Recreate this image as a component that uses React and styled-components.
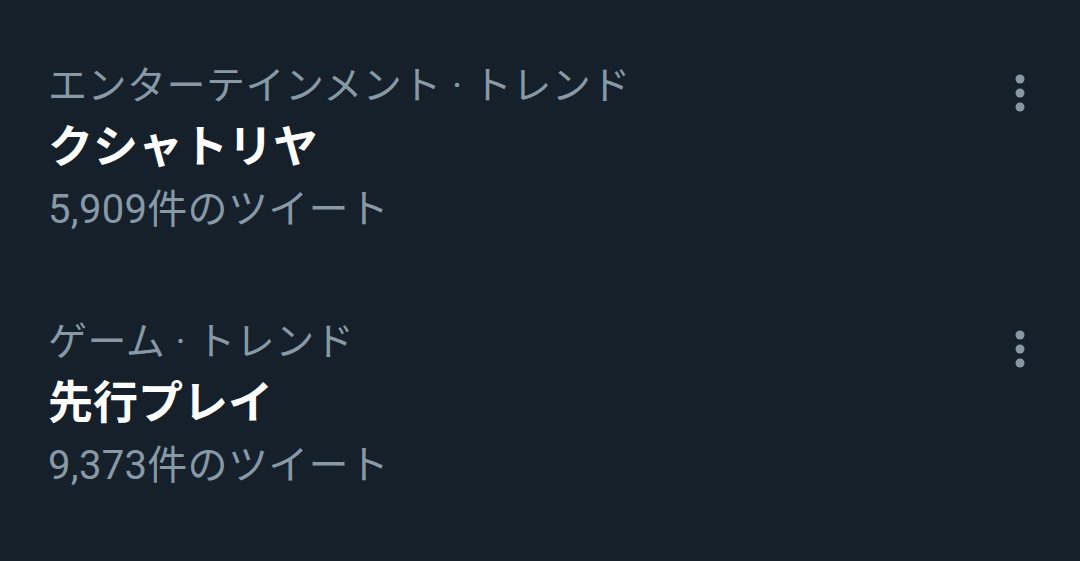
import React from "react";
import styled, { createGlobalStyle } from "styled-components";

const trends = [
  { category: "エンターテインメント · トレンド", name: "クシャトリヤ", count: "5,909件のツイート" },
  { category: "ゲーム · トレンド", name: "先行プレイ", count: "9,373件のツイート" },
];

const GlobalStyle = createGlobalStyle`
  html, body {
    margin: 0;
    padding: 0;
    background: #15202b;
  }
  body {
    font-family: Roboto, "Noto Sans CJK JP", sans-serif;
  }
`;

const MoreIcon = () => (
  <svg width="10" height="38" viewBox="0 0 10 38">
    <circle cx="5" cy="5" r="4.5" fill="#8899a6" />
    <circle cx="5" cy="19" r="4.5" fill="#8899a6" />
    <circle cx="5" cy="33" r="4.5" fill="#8899a6" />
  </svg>
);

const App = () => {
  return (
    <>
      <GlobalStyle />
      <TrendList>
        {trends.map((t) => (
          <TrendRow key={t.name}>
            <TrendBody>
              <Category>{t.category}</Category>
              <Name>{t.name}</Name>
              <Count>{t.count}</Count>
            </TrendBody>
            <MoreButton>
              <MoreIcon />
            </MoreButton>
          </TrendRow>
        ))}
      </TrendList>
    </>
  );
};

export default App;

const TrendList = styled.div`
  width: 1080px;
  height: 561px;
  background: #15202b;
  overflow: hidden;
`;

const TrendRow = styled.div`
  display: flex;
  align-items: flex-start;
  justify-content: space-between;
  height: 256px;
  box-sizing: border-box;
  padding: 59px 55px 0 48px;
`;

const TrendBody = styled.div`
  display: flex;
  flex-direction: column;
`;

const Category = styled.div`
  font-size: 39px;
  line-height: 54px;
  color: #8899a6;
  letter-spacing: 0.5px;
`;

const Name = styled.div`
  font-size: 45px;
  line-height: 70px;
  font-weight: 600;
  color: #ffffff;
`;

const Count = styled.div`
  font-size: 40px;
  line-height: 54px;
  color: #8899a6;
  letter-spacing: 0.3px;
`;

const MoreButton = styled.div`
  margin-top: 15px;
  display: flex;
`;
